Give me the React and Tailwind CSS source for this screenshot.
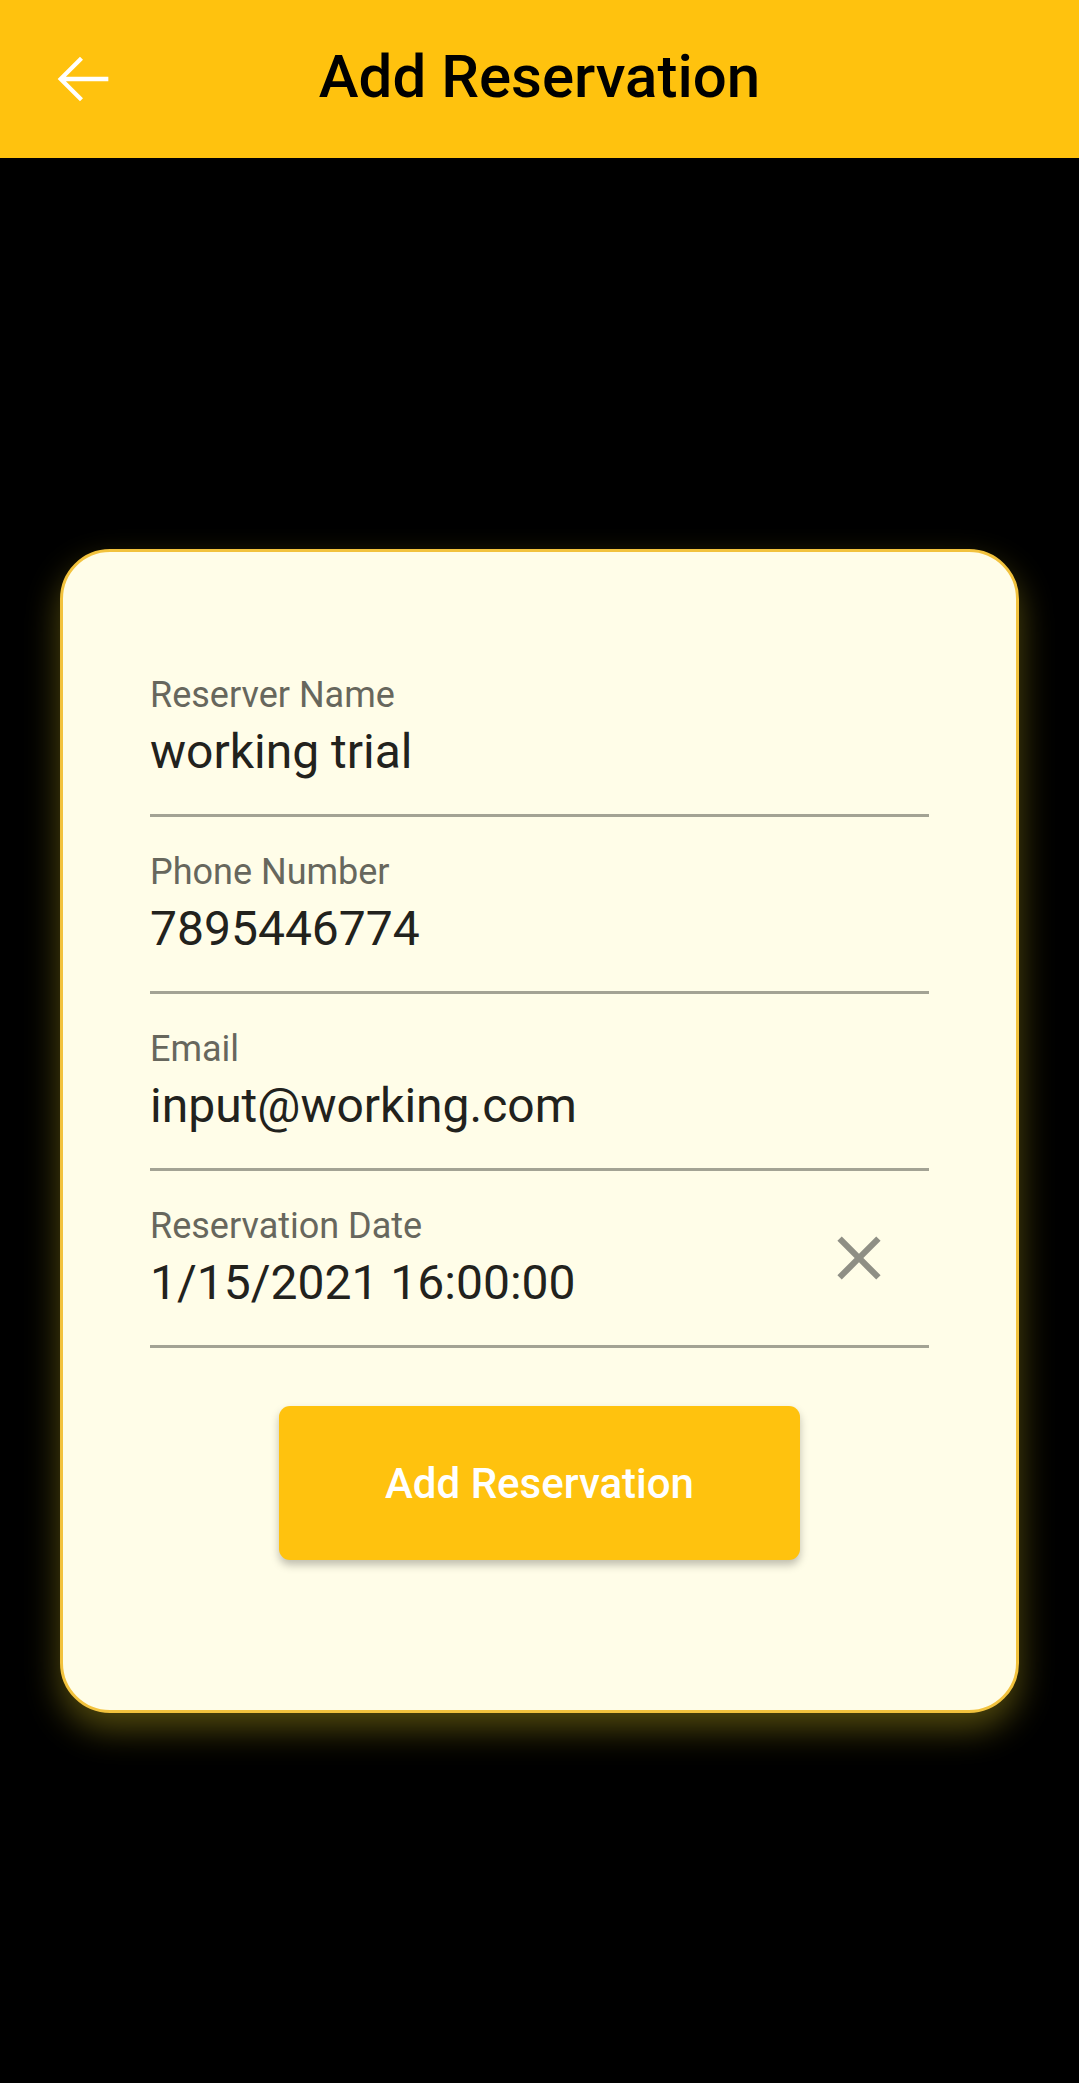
import React from "react";

function Field({ label, value, trailing, first }) {
  return (
    <div className={`flex items-center border-b-[3px] border-[#a3a394] pb-[34px] ${first ? "" : "mt-[34px]"}`}>
      <div className="flex flex-1 flex-col">
        <div className="text-[36px] leading-[42px] text-[#67675d]">{label}</div>
        <div className="mt-[8px] text-[48px] leading-[56px] text-[#22221d]">{value}</div>
      </div>
      {trailing}
    </div>
  );
}

export default function App() {
  return (
    <div className="w-[1079px] h-[2083px] bg-black" style={{ fontFamily: "Roboto, 'Noto Sans', sans-serif" }}>
      <header className="grid h-[158px] grid-cols-[1fr_auto_1fr] items-center bg-[#ffc20e]">
        <div className="pl-[45px]">
          <svg width="76" height="76" viewBox="0 0 24 24" fill="#ffffff">
            <path d="M20 11.3H6.6l5.4-5.4-.95-.95L4 12l7.05 7.05.95-.95-5.4-5.4H20z" />
          </svg>
        </div>
        <h1 className="mt-[-4px] text-[60px] font-medium leading-none text-black">Add Reservation</h1>
        <div />
      </header>

      <div className="mx-[60px] mt-[391px] rounded-[50px] border-[3px] border-[#f2c23d] bg-[#fffde8] px-[87px] pt-[122px] pb-[150px] shadow-[0_16px_34px_rgba(255,230,40,0.32)]">
        <Field first label="Reserver Name" value="working trial" />
        <Field label="Phone Number" value="7895446774" />
        <Field label="Email" value="input@working.com" />
        <Field
          label="Reservation Date"
          value="1/15/2021 16:00:00"
          trailing={
            <div className="mr-[33px] mt-[0px]">
              <svg width="74" height="74" viewBox="0 0 24 24" fill="#8f8f85">
                <path d="M19 6.41L17.59 5 12 10.59 6.41 5 5 6.41 10.59 12 5 17.59 6.41 19 12 13.41 17.59 19 19 17.59 13.41 12z" />
              </svg>
            </div>
          }
        />
        <div className="mt-[58px] flex justify-center">
          <button className="flex h-[154px] w-[521px] items-center justify-center rounded-[11px] bg-[#ffc20e] text-[42px] font-medium text-white shadow-[0_5px_8px_rgba(0,0,0,0.25)]">
            Add Reservation
          </button>
        </div>
      </div>
    </div>
  );
}
